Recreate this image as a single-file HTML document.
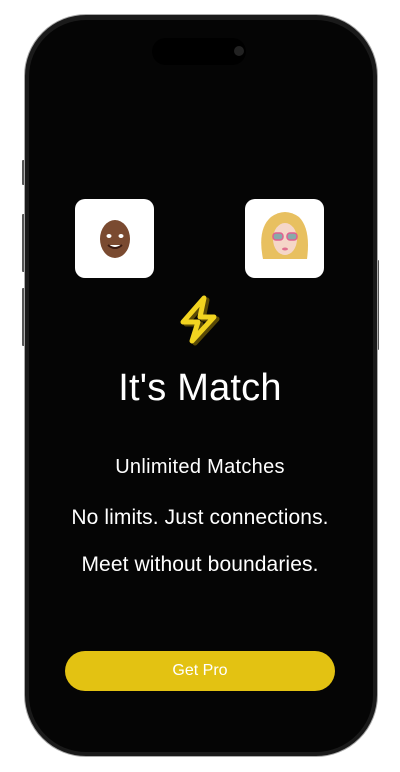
<!DOCTYPE html>
<html><head><meta charset="utf-8"><style>
html,body{margin:0;padding:0;background:#fff;width:400px;height:772px;overflow:hidden;font-family:"Liberation Sans",sans-serif}
.frame{position:absolute;left:24px;top:14px;width:352px;height:741px;border-radius:62px;background:#1a1a1a;border:1px solid #aaa}
.screen{position:absolute;left:29px;top:20px;width:344px;height:732px;border-radius:57px;background:#050505}
.btnside{position:absolute;background:#555;width:3px;border-radius:1px}
.island{position:absolute;left:152px;top:38px;width:94px;height:27px;border-radius:14px;background:#000}
.cam{position:absolute;left:234px;top:46px;width:10px;height:10px;border-radius:5px;background:#222}
.card{position:absolute;top:199px;width:79px;height:79px;border-radius:10px;background:#fff}
.t{position:absolute;left:0;width:400px;text-align:center;color:#fff;white-space:nowrap}
.btn{position:absolute;left:65px;top:651px;width:270px;height:40px;border-radius:20px;background:#e3c212;color:#fff;text-align:center;line-height:40px;font-size:16px}
</style></head><body>
<div class="btnside" style="left:22px;top:160px;height:25px"></div>
<div class="btnside" style="left:22px;top:214px;height:58px"></div>
<div class="btnside" style="left:22px;top:288px;height:58px"></div>
<div class="btnside" style="left:376px;top:260px;height:90px"></div>
<div class="frame"></div>
<div class="screen"></div>
<div class="island"></div><div class="cam"></div>
<div class="card" style="left:75px">
<svg width="79" height="79" viewBox="0 0 79 79"><ellipse cx="40" cy="40" rx="15" ry="19" fill="#7a4a30"/><ellipse cx="34" cy="37" rx="2.5" ry="2" fill="#fff"/><ellipse cx="46" cy="37" rx="2.5" ry="2" fill="#fff"/><path d="M33 46 Q40 52 47 46" stroke="#3a1a10" stroke-width="2" fill="#fff"/></svg></div>
<div class="card" style="left:245px">
<svg width="79" height="79" viewBox="0 0 79 79"><path d="M18 60 Q12 30 26 18 Q40 8 54 18 Q66 30 62 60 Z" fill="#e8c060"/><ellipse cx="40" cy="40" rx="12" ry="16" fill="#f5d6c8"/><rect x="28" y="34" width="10" height="7" rx="3" fill="#8aa" stroke="#e06090" stroke-width="1.5"/><rect x="42" y="34" width="10" height="7" rx="3" fill="#8aa" stroke="#e06090" stroke-width="1.5"/><ellipse cx="40" cy="50" rx="3" ry="1.5" fill="#e07090"/></svg></div>
<svg style="position:absolute;left:173px;top:292px" width="56" height="56" viewBox="0 0 56 56">
<path d="M31 6 L10 30 L25 30 L19 49 L41 25 L27 25 Z" fill="none" stroke="#5a4a05" stroke-width="5" stroke-linejoin="round" transform="translate(3,2)"/>
<path d="M31 6 L10 30 L25 30 L19 49 L41 25 L27 25 Z" fill="none" stroke="#f2d420" stroke-width="5" stroke-linejoin="round"/></svg>
<div class="t" style="top:367px;font-size:38px;letter-spacing:0.2px">It's Match</div>
<div class="t" style="top:456px;font-size:20px;letter-spacing:0.3px">Unlimited Matches</div>
<div class="t" style="top:506px;font-size:21px;letter-spacing:0.1px">No limits. Just connections.</div>
<div class="t" style="top:553px;font-size:21px;letter-spacing:0.1px">Meet without boundaries.</div>
<div class="btn">Get Pro</div>
</body></html>
